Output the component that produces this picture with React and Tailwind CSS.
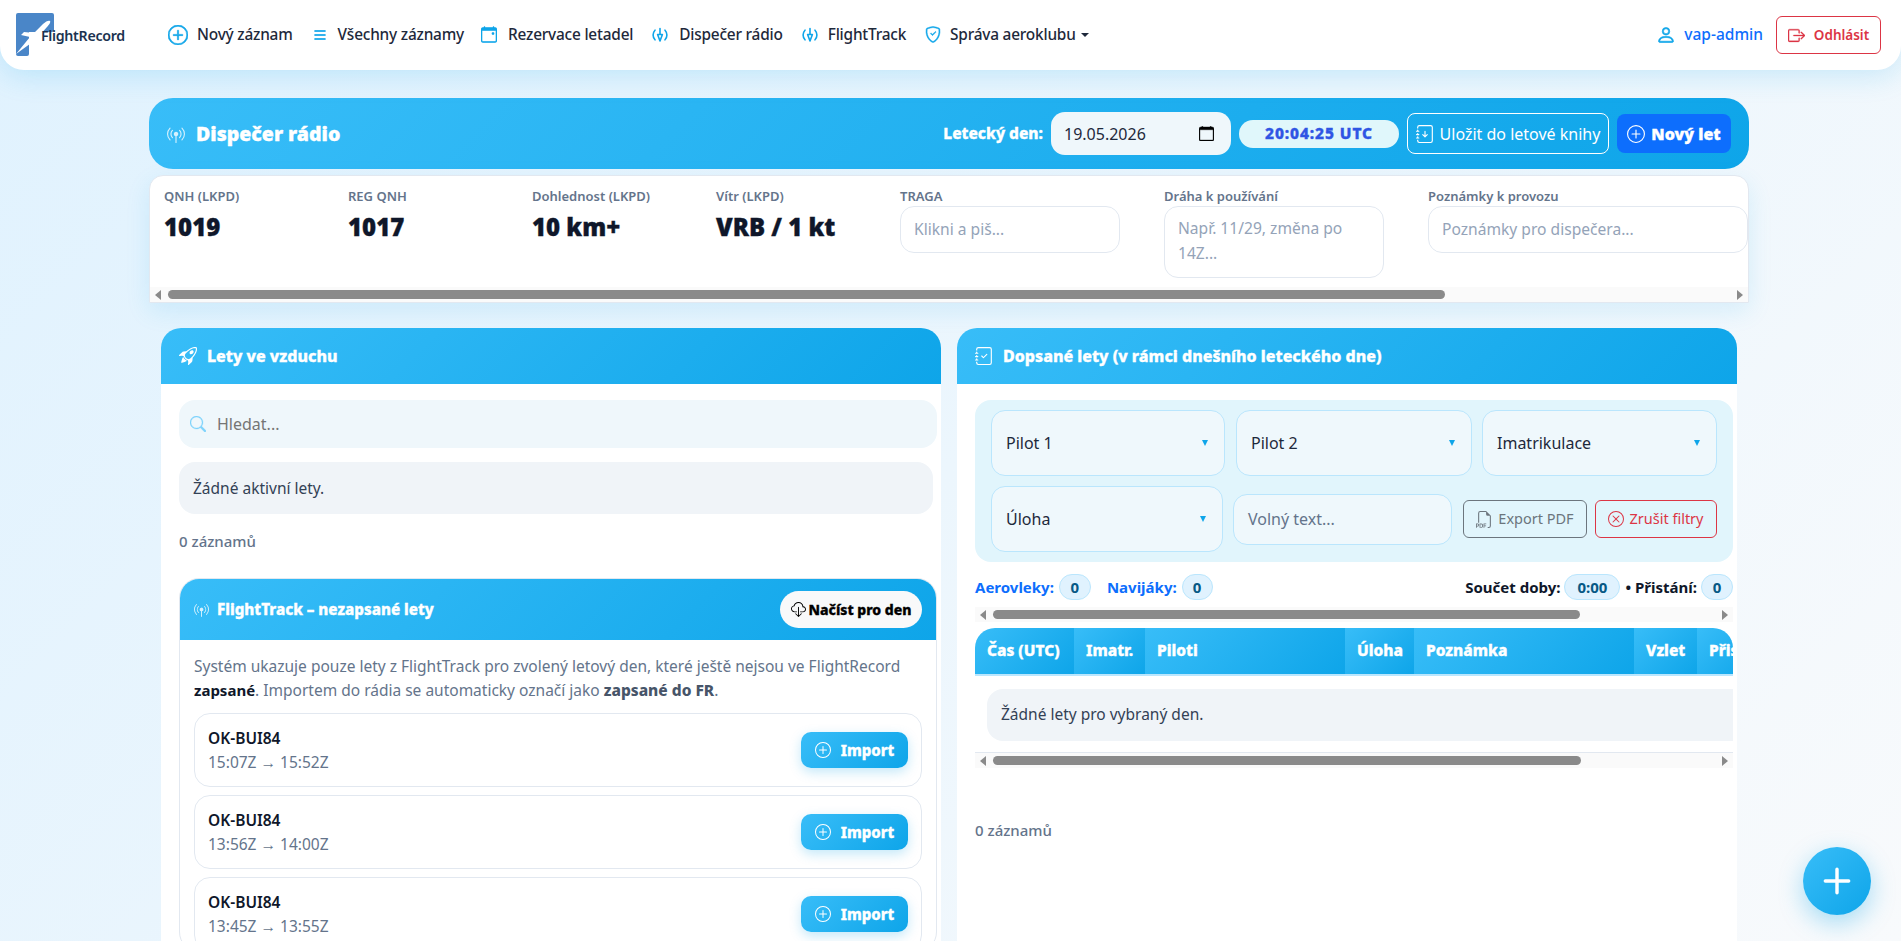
import {
  BsPlusCircle, BsList, BsCalendarEvent, BsShieldCheck, BsPerson, BsBoxArrowRight,
  BsBroadcastPin, BsRocketTakeoff, BsJournalArrowDown, BsJournalCheck, BsSearch, BsCloudDownload,
  BsFiletypePdf, BsXCircle, BsPlusLg, BsCalendar
} from 'react-icons/bs'

const flights = [
  { reg: 'OK-BUI84', time: '15:07Z → 15:52Z' },
  { reg: 'OK-BUI84', time: '13:56Z → 14:00Z' },
  { reg: 'OK-BUI84', time: '13:45Z → 13:55Z' },
]

const gradient = 'bg-[linear-gradient(135deg,#38bdf8,#0ea5e9)]'
const heavy = '[-webkit-text-stroke:0.35px_currentColor]'

const RadioIcon = ({ size = 16, className }) => (
  <svg width={size} height={size} viewBox="0 0 16 16" fill="none" stroke="currentColor" strokeWidth="1.6" strokeLinecap="round" strokeLinejoin="round" className={className}>
    <path d="M3 3.2a7 7 0 0 0 0 9.6M13 3.2a7 7 0 0 1 0 9.6" />
    <path d="M8 1.5v6M5.6 7.5h4.8L8 14z" />
  </svg>
)

const Logo = () => (
  <div className="relative w-[110px] h-[44px] shrink-0">
    <svg width="38" height="43" viewBox="0 0 38 43" className="absolute left-0 top-0">
      <path d="M2 0h34a2 2 0 0 1 2 2v15a2 2 0 0 1-2 2H13v22a2 2 0 0 1-2 2H2a2 2 0 0 1-2-2V2a2 2 0 0 1 2-2z" fill="#4a86c8" />
      <path d="M0 42 L14 25 L5 23 L8 20 L18 21 L27 12 C30 9 33 8 34 9 C35 10 33 13 31 15 L23 24 L25 35 L21 37 L18 29 Z" fill="#fff" transform="translate(0 -1)" />
    </svg>
    <span className="absolute left-[25px] top-[12px] text-[14.2px] font-semibold text-[#1b3350] tracking-[-0.3px]">FlightRecord</span>
  </div>
)

const NavItem = ({ icon, box = 'w-[16px]', className, label, caret }) => (
  <a className={`flex items-center text-[15.4px] font-medium tracking-[-0.2px] text-[#1e293b] whitespace-nowrap ${className}`}>
    <span className={`flex items-center justify-center text-[#0ea5e9] ${box}`}>{icon}</span>
    {label}
    {caret && <span className="ml-[5px] w-0 h-0 border-x-[4px] border-x-transparent border-t-[4px] border-t-[#1e293b]" />}
  </a>
)

const Metric = ({ label, value }) => (
  <div className="w-[184px] shrink-0">
    <div className="text-[13px] font-semibold text-[#64748b] leading-[18px]">{label}</div>
    <div className={`mt-[7px] text-[24px] font-black text-[#0f172a] leading-[30px] ${heavy}`}>{value}</div>
  </div>
)

const FieldLabel = ({ children }) => (
  <div className="mb-[1px] text-[13px] font-semibold text-[#64748b] leading-[18px]">{children}</div>
)

// windows style scrollbar, the real one can't be had in the headless browser
const Scrollbar = ({ thumb, className = '' }) => (
  <div className={`flex items-center h-[15px] bg-[#fafafa] ${className}`}>
    <span className="ml-[5px] w-0 h-0 border-y-[5px] border-y-transparent border-r-[6px] border-r-[#8a8a8a]" />
    <div className={`ml-[7px] h-[9px] rounded-full bg-[#8a8a8a] ${thumb}`} />
    <span className="ml-auto mr-[5px] w-0 h-0 border-y-[5px] border-y-transparent border-l-[6px] border-l-[#8a8a8a]" />
  </div>
)

const PanelHeader = ({ icon: Icon, title }) => (
  <div className={`h-[56px] flex items-center gap-[10px] px-[18px] rounded-t-[20px] ${gradient} text-white`}>
    <Icon size={18} />
    <span className={`text-[16px] font-extrabold ${heavy}`}>{title}</span>
  </div>
)

const Select = ({ label, className }) => (
  <div className={`h-[66px] flex items-center justify-between pl-[14px] pr-[16px] bg-[#eff8fc] border border-[#bae6fd] rounded-[14px] text-[16px] text-[#1e293b] ${className}`}>
    {label}
    <span className="w-0 h-0 border-x-[3px] border-x-transparent border-t-[6px] border-t-[#0ea5e9]" />
  </div>
)

const Pill = ({ children, className = 'w-[32px]' }) => (
  <span className={`h-[26px] flex items-center justify-center rounded-full bg-[#e0f2fe] border border-[#bae6fd] text-[15px] font-bold text-[#075985] ${className}`}>
    {children}
  </span>
)

const Th = ({ className, children }) => (
  <div className={`h-[46px] flex items-center px-[12px] shrink-0 ${gradient} text-[15.5px] font-extrabold text-white whitespace-nowrap overflow-hidden ${heavy} ${className}`}>
    {children}
  </div>
)

export default function App() {
  return (
    <div className="h-screen overflow-hidden bg-[linear-gradient(135deg,#e0f2fe,#f8fafc)] font-['Noto_Sans','Open_Sans',sans-serif]">
      <nav className="relative h-[70px] flex items-center pl-[16px] pr-[20px] bg-white rounded-b-[24px] shadow-[0_6px_28px_rgba(14,165,233,0.18)]">
        <Logo />
        <div className="ml-[42px] flex items-center">
          <NavItem icon={<BsPlusCircle size={20} strokeWidth={0.5} />} box="w-[20px] mr-[9px]" label="Nový záznam" />
          <NavItem icon={<BsList size={22} strokeWidth={0.7} />} box="w-[16px] mr-[10px]" className="ml-[19px]" label="Všechny záznamy" />
          <NavItem icon={<BsCalendarEvent size={17} strokeWidth={0.6} />} box="w-[16px] mr-[11px]" className="ml-[17px]" label="Rezervace letadel" />
          <NavItem icon={<RadioIcon />} box="w-[16px] mr-[11px]" className="ml-[19px]" label="Dispečer rádio" />
          <NavItem icon={<RadioIcon />} box="w-[16px] mr-[10px]" className="ml-[19px]" label="FlightTrack" />
          <NavItem icon={<BsShieldCheck size={17} strokeWidth={0.5} />} box="w-[16px] mr-[9px]" className="ml-[19px]" label="Správa aeroklubu" caret />
        </div>
        <div className="ml-auto flex items-center">
          <BsPerson size={20} strokeWidth={0.5} className="text-[#0ea5e9]" />
          <span className="ml-[8px] text-[15.5px] font-medium text-[#0d6efd]">vap-admin</span>
          <button className="ml-[13px] w-[105px] h-[38px] flex items-center justify-center gap-[9px] border border-[#dc3545] rounded-[6px] text-[13.5px] font-semibold text-[#dc3545]">
            <BsBoxArrowRight size={17} strokeWidth={0.3} />
            Odhlásit
          </button>
        </div>
      </nav>

      <main className="ml-[149px] w-[1600px] pt-[28px]">
        <header className={`h-[71px] flex items-center pl-[18px] pr-[18px] rounded-[24px] ${gradient} text-white`}>
          <BsBroadcastPin size={18} className="opacity-80" />
          <h1 className={`ml-[11px] pt-[1px] text-[19.5px] font-black ${heavy}`}>Dispečer rádio</h1>
          <span className={`ml-auto pt-[1px] text-[15.5px] font-extrabold ${heavy}`}>Letecký den:</span>
          <div className="ml-[8px] w-[180px] h-[43px] flex items-center justify-between pl-[13px] pr-[14px] bg-[#eff7fb] rounded-[14px] text-[16px] text-[#1e293b]">
            19.05.2026
            <BsCalendar size={15} strokeWidth={0.4} className="text-black mr-[3px]" />
          </div>
          <div className={`ml-[8px] w-[160px] h-[28px] flex items-center justify-center rounded-full bg-[#e0f7fb] text-[15.5px] font-extrabold tracking-[0.9px] text-[#2f55e4] ${heavy}`}>
            20:04:25 UTC
          </div>
          <button className="ml-[8px] w-[202px] h-[41px] pt-[1px] flex items-center justify-center gap-[6px] border border-white rounded-[8px] text-[16px]">
            <BsJournalArrowDown size={18} />
            Uložit do letové knihy
          </button>
          <button className={`ml-[8px] w-[114px] h-[39px] pt-[1px] flex items-center justify-center gap-[6px] bg-[#0d6efd] rounded-[8px] text-[16px] font-black ${heavy}`}>
            <BsPlusCircle size={18} />
            Nový let
          </button>
        </header>

        <section className="mt-[6px] h-[128px] flex flex-col bg-white border border-[#e2e8f0] rounded-t-[14px] overflow-hidden shadow-[0_8px_24px_rgba(14,165,233,0.12)]">
          <div className="flex-1 flex pl-[14px] pt-[11px] overflow-hidden">
            <Metric label="QNH (LKPD)" value="1019" />
            <Metric label="REG QNH" value="1017" />
            <Metric label="Dohlednost (LKPD)" value="10 km+" />
            <Metric label="Vítr (LKPD)" value="VRB / 1 kt" />
            <div className="w-[264px] shrink-0">
              <FieldLabel>TRAGA</FieldLabel>
              <div className="w-[220px] h-[47px] flex items-center px-[13px] border border-[#e2e8f0] rounded-[14px] text-[15.6px] text-[#94a3b8]">Klikni a piš...</div>
            </div>
            <div className="w-[264px] shrink-0">
              <FieldLabel>Dráha k používání</FieldLabel>
              <div className="w-[220px] h-[72px] px-[13px] pt-[9px] border border-[#e2e8f0] rounded-[14px] text-[15.6px] leading-[25px] text-[#94a3b8]">Např. 11/29, změna po 14Z...</div>
            </div>
            <div className="w-[320px] shrink-0">
              <FieldLabel>Poznámky k provozu</FieldLabel>
              <div className="h-[47px] flex items-center px-[13px] border border-[#e2e8f0] rounded-[14px] text-[15.6px] text-[#94a3b8]">Poznámky pro dispečera...</div>
            </div>
          </div>
          <Scrollbar thumb="w-[1277px]" />
        </section>

        <div className="mt-[25px] px-[12px] grid grid-cols-2 gap-[16px]">
          {/* Lety ve vzduchu */}
          <div className="h-[700px] bg-white rounded-t-[20px]">
            <PanelHeader icon={BsRocketTakeoff} title="Lety ve vzduchu" />
            <div className="pl-[18px] pr-[4px] pt-[16px]">
              <div className="h-[48px] flex items-center gap-[11px] px-[11px] bg-[#eff7fb] rounded-[16px] text-[16px] text-[#757575]">
                <BsSearch size={16} strokeWidth={0.3} className="text-[#7dd3fc]" />
                Hledat...
              </div>
              <div className="mt-[14px] mr-[4px] h-[52px] flex items-center px-[14px] pt-[1px] bg-[#f0f4f8] rounded-[16px] text-[15.5px] text-[#334155]">
                Žádné aktivní lety.
              </div>
              <div className="mt-[17px] text-[15px] font-medium leading-[20px] text-[#64748b]">0 záznamů</div>

              <div className="mt-[27px] border border-[#e2e8f0] rounded-[20px] overflow-hidden">
                <div className={`h-[61px] flex items-center pl-[14px] pr-[14px] ${gradient} text-white`}>
                  <BsBroadcastPin size={15} className="opacity-80" />
                  <span className={`ml-[8px] text-[15.2px] font-extrabold ${heavy}`}>FlightTrack – nezapsané lety</span>
                  <button className={`ml-auto w-[142px] h-[37px] flex items-center justify-center gap-[3px] rounded-full bg-[#f8f9fa] text-[14px] font-extrabold text-black ${heavy}`}>
                    <BsCloudDownload size={15} />
                    Načíst pro den
                  </button>
                </div>
                <div className="px-[14px] pt-[14px]">
                  <p className="text-[15.5px] leading-[24px] text-[#64748b]">
                    Systém ukazuje pouze lety z FlightTrack pro zvolený letový den, které ještě nejsou ve FlightRecord{' '}
                    <strong className="font-bold text-[#0f172a] text-[15px]">zapsané</strong>. Importem do rádia se automaticky označí jako{' '}
                    <strong className="font-extrabold text-[#475569]">zapsané do FR</strong>.
                  </p>
                  <div className="mt-[11px] flex flex-col gap-[8px]">
                    {flights.map((f, i) => (
                      <div key={i} className="h-[74px] flex items-center justify-between pl-[13px] pr-[13px] border border-[#e2e8f0] rounded-[16px]">
                        <div>
                          <div className="text-[15.5px] font-semibold leading-[24px] text-[#0f172a]">{f.reg}</div>
                          <div className="text-[15.5px] leading-[24px] text-[#64748b]">{f.time}</div>
                        </div>
                        <button className={`w-[107px] h-[36px] flex items-center justify-center gap-[10px] rounded-[10px] ${gradient} text-[15px] font-extrabold text-white shadow-[0_4px_12px_rgba(14,165,233,0.25)] ${heavy}`}>
                          <BsPlusCircle size={16} />
                          Import
                        </button>
                      </div>
                    ))}
                  </div>
                </div>
              </div>
            </div>
          </div>

          {/* Dopsané lety */}
          <div className="h-[700px] bg-white rounded-t-[20px]">
            <PanelHeader icon={BsJournalCheck} title="Dopsané lety (v rámci dnešního leteckého dne)" />
            <div className="pl-[18px] pr-[4px] pt-[16px]">
              <div className="h-[162px] px-[16px] pt-[10px] bg-[#e1f5fc] rounded-[16px]">
                <div className="flex">
                  <Select label="Pilot 1" className="w-[234px]" />
                  <Select label="Pilot 2" className="ml-[11px] w-[236px]" />
                  <Select label="Imatrikulace" className="ml-[10px] w-[235px]" />
                </div>
                <div className="mt-[10px] flex items-center">
                  <Select label="Úloha" className="w-[232px]" />
                  <div className="ml-[10px] w-[219px] h-[51px] flex items-center px-[14px] bg-[#eff8fc] border border-[#bae6fd] rounded-[14px] text-[16px] text-[#64748b]">Volný text...</div>
                  <button className="ml-[11px] w-[124px] h-[38px] flex items-center justify-center gap-[5px] border border-[#6c757d] rounded-[6px] text-[14.5px] text-[#6c757d]">
                    <BsFiletypePdf size={17} />
                    Export PDF
                  </button>
                  <button className="ml-[8px] w-[122px] h-[38px] flex items-center justify-center gap-[5px] border border-[#dc3545] rounded-[6px] text-[14.5px] text-[#dc3545]">
                    <BsXCircle size={16} />
                    Zrušit filtry
                  </button>
                </div>
              </div>

              <div className="mt-[12px] h-[26px] flex items-center text-[15px] font-bold">
                <span className="text-[#0d6efd]">Aerovleky:</span>
                <Pill className="ml-[5px] w-[32px]">0</Pill>
                <span className="ml-[16px] text-[#0d6efd]">Navijáky:</span>
                <Pill className="ml-[5px] w-[31px]">0</Pill>
                <span className="ml-auto text-[#0f172a]">Součet doby:</span>
                <Pill className="ml-[4px] w-[56px]">0:00</Pill>
                <span className="ml-[5px] text-[#0f172a]">• Přistání:</span>
                <Pill className="ml-[4px] w-[32px]">0</Pill>
              </div>

              <Scrollbar thumb="w-[587px]" className="mt-[7px]" />

              <div className="mt-[6px] overflow-hidden">
                <div className="flex rounded-t-[20px] overflow-hidden border-b-2 border-[#bae6fd]">
                  <Th className="w-[99px]">Čas (UTC)</Th>
                  <Th className="w-[71px]">Imatr.</Th>
                  <Th className="w-[200px]">Piloti</Th>
                  <Th className="w-[69px]">Úloha</Th>
                  <Th className="w-[220px]">Poznámka</Th>
                  <Th className="w-[63px]">Vzlet</Th>
                  <Th className="w-[60px]">Přistání</Th>
                </div>
                <div className="mt-[13px] ml-[12px] h-[52px] flex items-center pl-[14px] bg-[#f0f4f8] rounded-l-[16px] text-[15.5px] text-[#334155]">
                  Žádné lety pro vybraný den.
                </div>
                <div className="mt-[11px] border-t border-[#e2e8f0]">
                  <Scrollbar thumb="w-[588px]" />
                </div>
              </div>

              <div className="mt-[52px] text-[15px] font-medium leading-[20px] text-[#64748b]">0 záznamů</div>
            </div>
          </div>
        </div>
      </main>

      <button className={`fixed right-[30px] bottom-[26px] w-[68px] h-[68px] flex items-center justify-center rounded-full ${gradient} text-white shadow-[0_8px_24px_rgba(14,165,233,0.35)]`}>
        <BsPlusLg size={34} strokeWidth={0.6} />
      </button>
    </div>
  )
}
